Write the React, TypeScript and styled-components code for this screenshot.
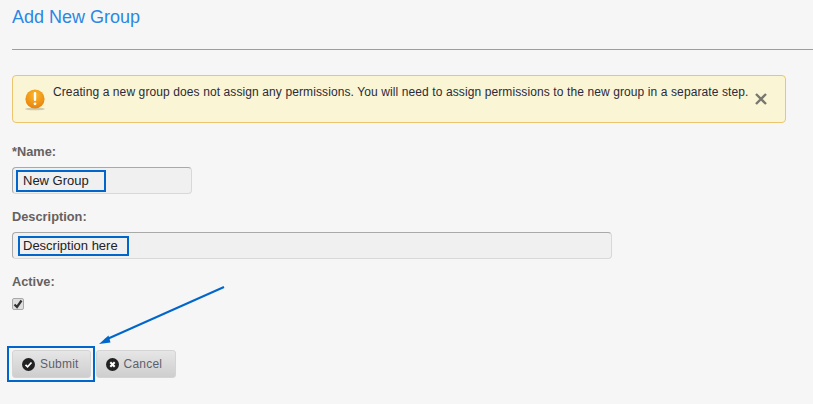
import React from "react";
import styled, { createGlobalStyle } from "styled-components";

const Global = createGlobalStyle`
  html, body { margin: 0; padding: 0; background: #f6f6f6; }
  body { font-family: "Liberation Sans", Arial, sans-serif; width: 813px; height: 404px; overflow: hidden; }
`;

const Page = styled.div`
  position: relative;
  width: 813px;
  height: 404px;
  padding: 7px 0 0 12px;
  box-sizing: border-box;
  background: #f6f6f6;
`;

const Title = styled.h1`
  margin: 0;
  font-size: 18px;
  line-height: 20px;
  font-weight: 400;
  color: #2b87e3;
`;

const Divider = styled.hr`
  margin: 22px 0 25px;
  height: 1px;
  border: 0;
  background: #e88a3a;
`;

const Alert = styled.div`
  display: flex;
  align-items: flex-start;
  box-sizing: border-box;
  width: 774px;
  height: 48px;
  margin-bottom: 21px;
  padding: 9px 0 0 12px;
  background: #faf5d4;
  border: 1px solid #ecc56e;
  border-radius: 4px;
`;

const AlertIcon = styled.svg`
  flex: none;
  width: 20px;
  height: 22px;
  margin: 4px 8px 0 0;
`;

const AlertText = styled.span`
  flex: none;
  font-size: 12px;
  line-height: 15px;
  letter-spacing: 0.104px;
  color: #2a2a3a;
`;

const Close = styled.svg`
  flex: none;
  width: 12px;
  height: 12px;
  margin: 8px 0 0 6px;
`;

const Field = styled.div`
  display: flex;
  flex-direction: column;
  align-items: flex-start;
`;

const Label = styled.label`
  margin: 1px 0 8px;
  font-size: 12.8px;
  line-height: 14px;
  font-weight: 700;
  color: #66615f;
`;

const InputBox = styled.div<{ $width: number }>`
  box-sizing: border-box;
  display: flex;
  align-items: center;
  width: ${(p) => p.$width}px;
  height: 27px;
  margin-bottom: 15px;
  padding-left: 3px;
  background: #f0f0f0;
  border: 1px solid #d8d8d8;
  border-top-color: #a9a9a9;
  border-left-color: #a9a9a9;
  border-radius: 4px;
`;

const Marked = styled.span<{ $width: number; $height: number; $inset: number; $pad: number }>`
  box-sizing: border-box;
  display: block;
  width: ${(p) => p.$width}px;
  height: ${(p) => p.$height}px;
  margin-left: ${(p) => p.$inset}px;
  padding-left: ${(p) => p.$pad}px;
  border: 2px solid #0066cc;
  font-size: 13px;
  line-height: ${(p) => p.$height - 4}px;
  color: #222;
`;

const Check = styled.div`
  box-sizing: border-box;
  width: 12px;
  height: 12px;
  margin-top: 1px;
  background: #dedede;
  border: 1px solid #a9a9a9;
  border-radius: 2px;
  display: flex;
  align-items: center;
  justify-content: center;
`;

const Actions = styled.div`
  display: flex;
  align-items: center;
  gap: 5px;
  margin-top: 40px;
`;

const Button = styled.button<{ $right: number }>`
  box-sizing: border-box;
  display: flex;
  align-items: center;
  gap: 5px;
  height: 28px;
  padding: 0 ${(p) => p.$right}px 0 9px;
  border: 1px solid #d4d4d4;
  border-radius: 3px;
  background: linear-gradient(#e6e6e6, #cecece);
  font-family: inherit;
  font-size: 12px;
  letter-spacing: 0.2px;
  color: #5f5f6b;
`;

const Highlight = styled.div`
  position: absolute;
  left: 7px;
  top: 346px;
  width: 88px;
  height: 36px;
  box-sizing: border-box;
  border: 2px solid #0066cc;
`;

const Arrow = styled.svg`
  position: absolute;
  left: 95px;
  top: 283px;
  width: 132px;
  height: 64px;
`;

const CircleIcon = styled.svg`
  width: 13px;
  height: 13px;
  flex: none;
`;

export default function App() {
  return (
    <Page>
      <Global />
      <Title>Add New Group</Title>
      <Divider />
      <Alert>
        <AlertIcon viewBox="0 0 20 22">
          <defs>
            <radialGradient id="warn" cx="50%" cy="30%" r="70%">
              <stop offset="0" stopColor="#fbb92c" />
              <stop offset="1" stopColor="#e8820c" />
            </radialGradient>
          </defs>
          <ellipse cx="10" cy="20" rx="10" ry="1.3" fill="#cfcbb0" />
          <circle cx="10" cy="10" r="9.6" fill="url(#warn)" />
          <rect x="8.8" y="3" width="2.4" height="9" rx="1.1" fill="#fff" />
          <circle cx="10" cy="14.8" r="1.4" fill="#fff" />
        </AlertIcon>
        <AlertText>
          Creating a new group does not assign any permissions. You will need to assign permissions to the new group in a separate step.
        </AlertText>
        <Close viewBox="0 0 12 12">
          <path d="M1 1 L11 11 M11 1 L1 11" stroke="#77776f" strokeWidth="2.4" />
        </Close>
      </Alert>
      <Field>
        <Label>*Name:</Label>
        <InputBox $width={180}>
          <Marked $width={90} $height={22} $inset={0} $pad={5}>New Group</Marked>
        </InputBox>
      </Field>
      <Field>
        <Label>Description:</Label>
        <InputBox $width={600}>
          <Marked $width={111} $height={20} $inset={2} $pad={3}>Description here</Marked>
        </InputBox>
      </Field>
      <Field>
        <Label>Active:</Label>
        <Check>
          <svg width="10" height="10" viewBox="0 0 10 10">
            <path d="M1.5 5.5 L4 8 L8.5 1.5" fill="none" stroke="#333" strokeWidth="2.2" />
          </svg>
        </Check>
      </Field>
      <Actions>
        <Button $right={11}>
          <CircleIcon viewBox="0 0 13 13">
            <circle cx="6.5" cy="6.5" r="6.5" fill="#222" />
            <path d="M3.5 6.8 L5.6 8.8 L9.5 4.5" fill="none" stroke="#fff" strokeWidth="1.7" />
          </CircleIcon>
          Submit
        </Button>
        <Button $right={13}>
          <CircleIcon viewBox="0 0 13 13">
            <circle cx="6.5" cy="6.5" r="6.5" fill="#222" />
            <path d="M4.3 4.3 L8.7 8.7 M8.7 4.3 L4.3 8.7" fill="none" stroke="#fff" strokeWidth="2.1" />
          </CircleIcon>
          Cancel
        </Button>
      </Actions>
      <Highlight />
      <Arrow viewBox="0 0 132 64">
        <path d="M129 4 L10 57" stroke="#0066cc" strokeWidth="2" fill="none" />
        <path d="M4 61 L13.5 52.5 L15.5 59.5 Z" fill="#0066cc" />
      </Arrow>
    </Page>
  );
}
